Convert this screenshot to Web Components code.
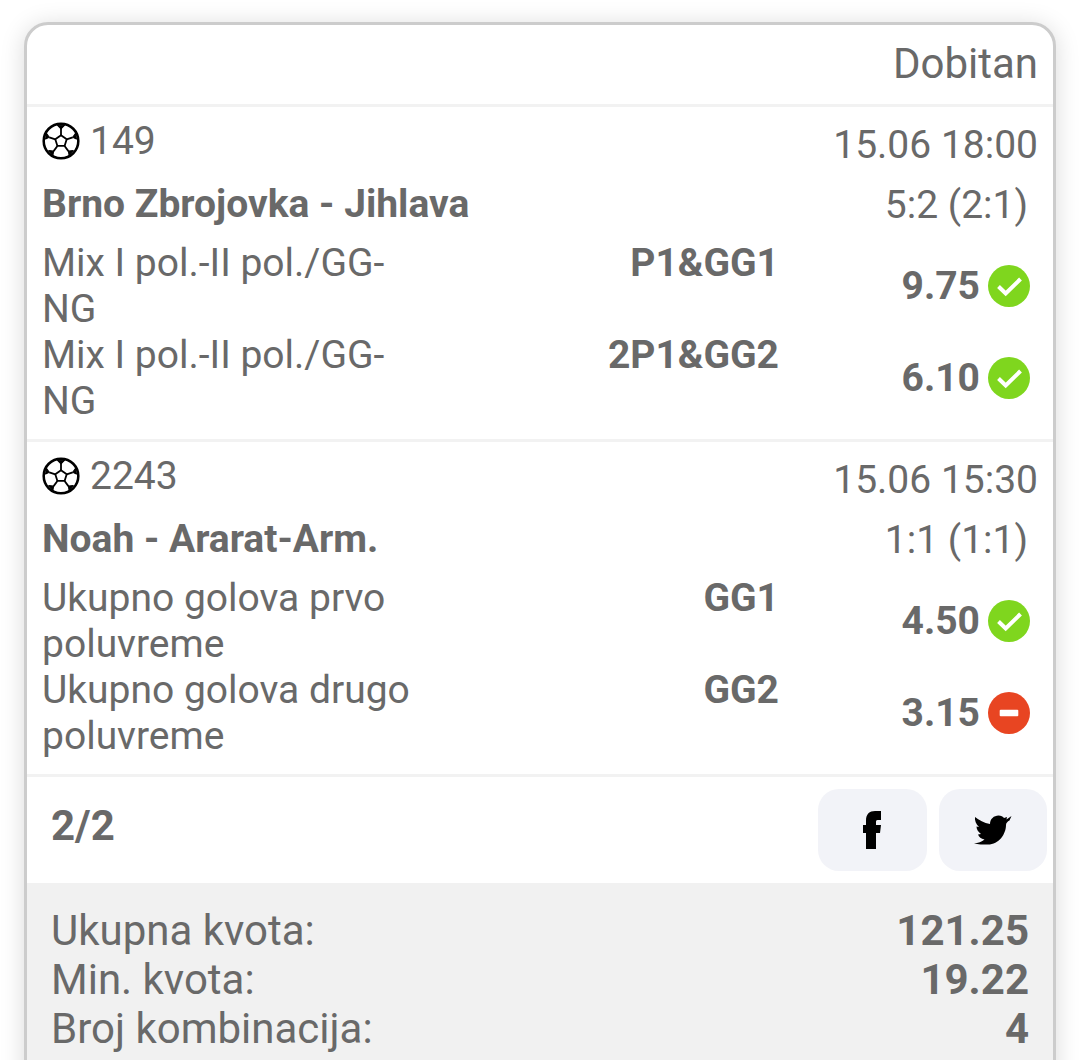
<!DOCTYPE html>
<html>
<head>
<meta charset="utf-8">
<title>Dobitan</title>
<style>
  html, body { margin: 0; height: 1060px; overflow: hidden; background: #fff; }
  body { padding: 22px 24px 0; box-sizing: border-box; font-family: Roboto, sans-serif; color: #696969; }
</style>
</head>
<body>
<ticket-card status="Dobitan">
  <ticket-event code="149" time="15.06 18:00" name="Brno Zbrojovka - Jihlava" score="5:2 (2:1)">
    <ticket-bet label="Mix I pol.-II pol./GG-NG" pick="P1&amp;GG1" odds="9.75" state="won"></ticket-bet>
    <ticket-bet label="Mix I pol.-II pol./GG-NG" pick="2P1&amp;GG2" odds="6.10" state="won"></ticket-bet>
  </ticket-event>
  <ticket-event code="2243" time="15.06 15:30" name="Noah - Ararat-Arm." score="1:1 (1:1)">
    <ticket-bet label="Ukupno golova prvo poluvreme" pick="GG1" odds="4.50" state="won"></ticket-bet>
    <ticket-bet label="Ukupno golova drugo poluvreme" pick="GG2" odds="3.15" state="lost"></ticket-bet>
  </ticket-event>
  <ticket-share count="2/2"></ticket-share>
  <ticket-summary>
    <summary-row label="Ukupna kvota:" value="121.25"></summary-row>
    <summary-row label="Min. kvota:" value="19.22"></summary-row>
    <summary-row label="Broj kombinacija:" value="4"></summary-row>
  </ticket-summary>
</ticket-card>

<script>
const ball = `
  <svg viewBox="0 0 36 36" width="38" height="38" fill="none" stroke="#000" stroke-width="2.4" stroke-linejoin="round">
    <circle cx="18" cy="18" r="16.4"/>
    <path d="M18 12.5l5.4 3.9-2 6.3h-6.8l-2-6.3z" stroke-width="1.7"/>
    <path d="M18 12.5V6.500M23.4 16.4l5.7-1.900M21.4 22.7l3.600 4.900M14.6 22.7l-3.600 4.900M12.6 16.4l-5.700-1.900" stroke-width="1.7"/>
    <path d="M14.500 3L18 6.500 21.500 3zM29.100 14.500l2.700-3.900 .8 5.500zM25 27.600l4.600-.5-4 4.100zM11 27.600l-4.600-.5 4 4.100zM6.900 14.500L4.200 10.600l-.8 5.500z" fill="#000" stroke-width="1"/>
  </svg>`;

class TicketCard extends HTMLElement {
  constructor() {
    super();
    this.attachShadow({ mode: "open" });
    this.shadowRoot.innerHTML = `
      <style>
        :host {
          display: block;
          width: 1032px;
          box-sizing: border-box;
          border: 3px solid #ccc;
          border-radius: 24px;
          background: #fff;
          box-shadow: 0 3px 24px rgba(0, 0, 0, .15);
          overflow: hidden;
        }
        .head {
          height: 77px;
          padding: 0 15px 2px;
          display: flex;
          align-items: center;
          justify-content: flex-end;
          font-size: 42px;
          border-bottom: 3px solid #f2f2f2;
        }
      </style>
      <div class="head">${this.getAttribute("status")}</div>
      <slot></slot>
    `;
  }
}

class TicketEvent extends HTMLElement {
  constructor() {
    super();
    this.attachShadow({ mode: "open" });
    this.shadowRoot.innerHTML = `
      <style>
        :host {
          display: block;
          height: 335px;
          box-sizing: border-box;
          padding: 0 15px;
          border-bottom: 3px solid #f2f2f2;
          font-size: 39px;
          line-height: 46px;
        }
        .top { display: flex; justify-content: space-between; height: 68px; }
        .code { display: flex; align-items: center; gap: 10px; height: 67px; }
        .code svg { display: block; }
        .time { padding-top: 15px; }
        .name { display: flex; justify-content: space-between; height: 60px; margin-bottom: 5px; align-items: center; }
        .name b { font-weight: 700; margin-bottom: 2px; }
        .name span { padding-right: 10px; }
      </style>
      <div class="top">
        <div class="code">${ball}<span>${this.getAttribute("code")}</span></div>
        <div class="time">${this.getAttribute("time")}</div>
      </div>
      <div class="name">
        <b>${this.getAttribute("name")}</b>
        <span>${this.getAttribute("score")}</span>
      </div>
      <slot></slot>
    `;
  }
}

class TicketBet extends HTMLElement {
  constructor() {
    super();
    this.attachShadow({ mode: "open" });
    const won = this.getAttribute("state") === "won";
    const mark = won
      ? `<svg viewBox="0 0 42 42" width="42" height="42"><circle cx="21" cy="21" r="21" fill="#7fd61e"/><path d="M10.500 21.500l7.200 7L32.500 14" fill="none" stroke="#fff" stroke-width="4"/></svg>`
      : `<svg viewBox="0 0 42 42" width="42" height="42"><circle cx="21" cy="21" r="21" fill="#e84522"/><rect x="11.700" y="17.700" width="18.600" height="6.600" rx="1" fill="#fff"/></svg>`;
    this.shadowRoot.innerHTML = `
      <style>
        :host {
          display: grid;
          grid-template-columns: 375px 362px 1fr;
          align-items: start;
          height: 92px;
        }
        .pick { text-align: right; font-weight: 700; }
        .odds {
          display: flex;
          justify-content: flex-end;
          align-items: center;
          gap: 8px;
          padding-right: 8px;
          font-weight: 700;
          height: 92px;
        }
        .odds svg { display: block; }
      </style>
      <div class="label">${this.getAttribute("label")}</div>
      <div class="pick">${this.getAttribute("pick").replace("&", "&amp;")}</div>
      <div class="odds"><span>${this.getAttribute("odds")}</span>${mark}</div>
    `;
  }
}

class TicketShare extends HTMLElement {
  constructor() {
    super();
    this.attachShadow({ mode: "open" });
    this.shadowRoot.innerHTML = `
      <style>
        :host {
          display: flex;
          justify-content: space-between;
          align-items: flex-start;
          height: 106px;
          padding: 12px 6px 0 24px;
          box-sizing: border-box;
        }
        b { font-size: 42px; line-height: 50px; padding-top: 12px; }
        .btns { display: flex; gap: 12px; }
        .btn {
          width: 108.500px;
          height: 82px;
          border-radius: 21px;
          background: #f2f3f8;
          display: flex;
          align-items: center;
          justify-content: center;
        }
        svg { display: block; }
      </style>
      <b>${this.getAttribute("count")}</b>
      <div class="btns">
        <div class="btn"><svg viewBox="0 0 18 38" width="18" height="38"><path d="M3 38V22H0v-8h3V9.500C3 3 6.500 0 12 0h6v9h-3.500C13.400 9 13 9.800 13 11v3h5l-1 8h-4v16z"/></svg></div>
        <div class="btn"><svg viewBox="0 0 46 40" width="46" height="40"><path d="M5 7C9 10 14 13 20 14 20 9 24 5.500 28.500 5.500 31 5.500 33 6.500 34 8L37 7 36.500 9.500 41.500 6 39.500 10.500C37.500 11.500 36 13 36 15 36 24 29 34.500 18 34.500 13 34.500 8 34.500 4 33.500 8 33 12 32 14.500 29.500 11 29 9 27 8 24.500L11 24C8 22 6.500 19 6.500 16.500L9 17C6 14 4.500 10.500 5 7z"/></svg></div>
      </div>
    `;
  }
}

class TicketSummary extends HTMLElement {
  constructor() {
    super();
    this.attachShadow({ mode: "open" });
    this.shadowRoot.innerHTML = `
      <style>
        :host {
          display: block;
          background: #f1f1f1;
          padding: 23px 24px 40px;
          font-size: 42px;
          line-height: 49px;
          height: 200px;
        }
      </style>
      <slot></slot>
    `;
  }
}

class SummaryRow extends HTMLElement {
  constructor() {
    super();
    this.attachShadow({ mode: "open" });
    this.shadowRoot.innerHTML = `
      <style>
        :host { display: flex; justify-content: space-between; }
        b { font-weight: 700; }
      </style>
      <span>${this.getAttribute("label")}</span>
      <b>${this.getAttribute("value")}</b>
    `;
  }
}

customElements.define("ticket-card", TicketCard);
customElements.define("ticket-event", TicketEvent);
customElements.define("ticket-bet", TicketBet);
customElements.define("ticket-share", TicketShare);
customElements.define("ticket-summary", TicketSummary);
customElements.define("summary-row", SummaryRow);
</script>
</body>
</html>
